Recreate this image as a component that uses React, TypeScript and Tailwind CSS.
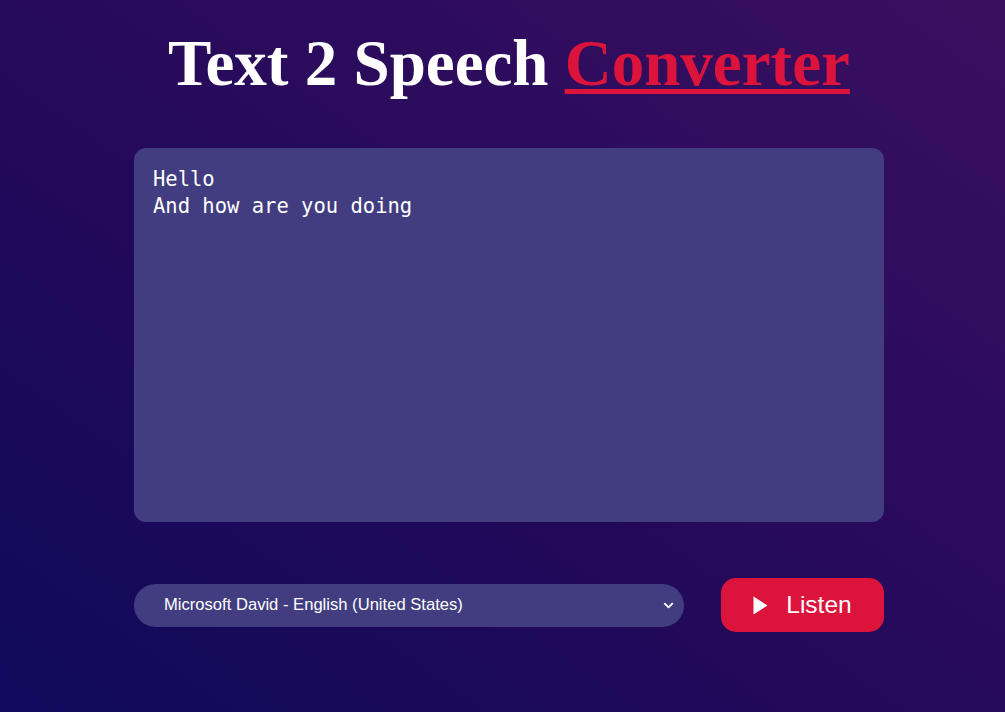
import { ChevronDown } from 'lucide-react';

export default function App() {
  return (
    <div className="min-h-[712px] w-full bg-[linear-gradient(to_right_top,#0f0a5c,#22095a_40%,#3a0f60)] flex flex-col items-center pl-[13px]">
      <h1 className="mt-[23px] text-[65px] leading-[80px] font-bold text-white font-['Liberation_Serif',serif]">
        Text 2 Speech <span className="text-[#dc143c] underline decoration-[5px] underline-offset-[4px]">Converter</span>
      </h1>

      <div className="mt-[45px] w-[750px] flex flex-col">
        <textarea
          className="h-[374px] w-full resize-none rounded-[12px] bg-[#413d80] px-[19px] py-[18px] text-[20.5px] leading-[27px] text-white outline-none font-['DejaVu_Sans_Mono',monospace]"
          defaultValue={'Hello\nAnd how are you doing'}
        />

        <div className="mt-[56px] flex items-center gap-[37px]">
          <div className="relative flex h-[43px] w-[550px] items-center rounded-full bg-[#413d80] pl-[30px] pr-[8px] text-[16.6px] text-white font-['Liberation_Sans',sans-serif]">
            <span className="flex-1">Microsoft David - English (United States)</span>
            <ChevronDown size={15} strokeWidth={3} className="text-white" />
          </div>
          <button className="flex h-[54px] w-[163px] items-center justify-center gap-[18px] rounded-[15px] bg-[#dc143c] text-[24.5px] text-white font-['Liberation_Sans',sans-serif]">
            <svg width="15" height="19" viewBox="0 0 15 19">
              <path d="M0.5 0.5 L14.5 9.5 L0.5 18.5 Z" fill="white" />
            </svg>
            <span>Listen</span>
          </button>
        </div>
      </div>
    </div>
  );
}
